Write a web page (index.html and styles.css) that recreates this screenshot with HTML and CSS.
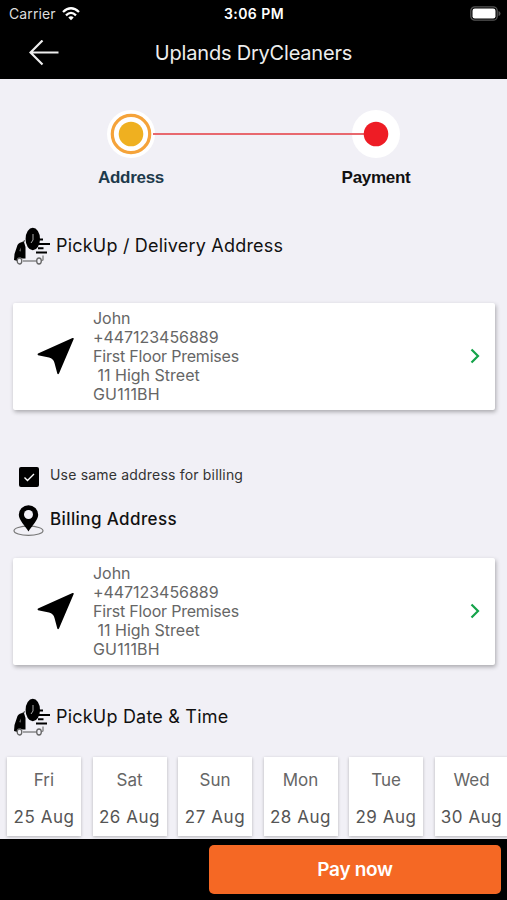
FILE: index.html
```html
<!DOCTYPE html>
<html lang="en">
<head>
	<meta charset="utf-8">
	<meta name="viewport" content="width=device-width, initial-scale=1">
	<title>Uplands DryCleaners</title>
	<link rel="stylesheet" href="styles.css">
</head>
<body>
<svg class="defs" width="0" height="0">
	<symbol id="scooter" viewBox="0 0 37 38">
		<path d="M7 16.500 11 13.500M9 34h14" fill="none" stroke="#555" stroke-width="1.200"/>
		<path d="M3.500 18Q5 15 10 15L11.500 20V31.500H8.500Q5.500 29 3.500 34L0 33 .500 27Z"/>
		<path d="M5 24l2-3.500v4z" fill="#555"/>
		<ellipse cx="18.800" cy="12" rx="7.200" ry="11.200"/>
		<path d="M19 7v6l-2 3" fill="none" stroke="#aaa" stroke-width="1"/>
		<path d="M24 12.500h5M24 17h12M24 21.200h5.500M22 25.500h11" stroke="#000" stroke-width="2"/>
		<path d="M29 28.500v4.500l-2 1" fill="none" stroke="#777" stroke-width="1.200"/>
		<ellipse cx="5.500" cy="34" rx="2.300" ry="3" fill="#f1f0f6" stroke="#666" stroke-width="1.300"/>
		<ellipse cx="25" cy="34" rx="2.300" ry="3" fill="#f1f0f6" stroke="#666" stroke-width="1.300"/>
	</symbol>
	<symbol id="arrow" viewBox="0 0 38 38">
		<path d="M1 16.500 35.500 1Q37 .500 36.700 2L22 36.500Q21 38 20.300 36.500L17.500 26Q16.500 21.500 12 20.500L1 18.300Q0 17.300 1 16.500Z"/>
	</symbol>
	<symbol id="chevron" viewBox="0 0 10 16">
		<path d="M1.500 1.500 8 8 1.500 14.500" fill="none" stroke="#15a34a" stroke-width="2.200"/>
	</symbol>
</svg>
<div class="main">
	<div class="status">
		<div class="carrier">
			<span class="carrier-name">Carrier</span>
			<svg width="18" height="14" viewBox="0 0 18 14" fill="none" stroke="#fff" stroke-width="2.300">
				<path d="M1 5Q9-2.500 17 5M4 8.300Q9 3.500 14 8.300"/>
				<path d="M6.300 10.500Q9 8 11.700 10.500L9 13.300Z" fill="#fff" stroke="none"/>
			</svg>
		</div>
		<div class="clock">3:06 PM</div>
		<svg class="battery" width="31" height="15" viewBox="0 0 31 15">
			<rect x=".800" y=".800" width="26.400" height="13.400" rx="4" fill="none" stroke="#555" stroke-width="1.300"/>
			<rect x="2.500" y="2.500" width="23" height="10" rx="2.300" fill="#fff"/>
			<path d="M28.500 5q2 .500 2 2.500t-2 2.500z" fill="#555"/>
		</svg>
	</div>
	<div class="navbar">
		<svg class="back" width="30" height="26" viewBox="0 0 30 26" fill="none" stroke="#eee" stroke-width="2.200">
			<path d="M29.500 12.500H1.500M13.500 .500 1.500 12.500l12 12"/>
		</svg>
		<h1 class="title">Uplands DryCleaners</h1>
	</div>

	<div class="steps">
		<div class="step">
			<svg width="48" height="48" viewBox="0 0 48 48">
				<circle cx="24" cy="24" r="24" fill="#fff"/>
				<circle cx="24" cy="24" r="18.700" fill="#fff" stroke="#f5a33a" stroke-width="3.200"/>
				<circle cx="24" cy="24" r="12.300" fill="#efb020"/>
			</svg>
			<span class="step-name active">Address</span>
		</div>
		<div class="step-line"></div>
		<div class="step">
			<svg width="48" height="48" viewBox="0 0 48 48">
				<circle cx="24" cy="24" r="24" fill="#fff"/>
				<path d="M0 24h14" stroke="#e8686e" stroke-width="2"/>
				<circle cx="24" cy="24" r="12.300" fill="#ee1c25"/>
			</svg>
			<span class="step-name">Payment</span>
		</div>
	</div>

	<div class="section pickup">
		<svg width="37" height="38"><use href="#scooter"/></svg>
		<h2 class="heading">PickUp / Delivery Address</h2>
	</div>
	<div class="card">
		<svg class="card-arrow" width="38" height="38"><use href="#arrow"/></svg>
		<div class="address">
			<div class="phone">John</div>
			<div class="phone">+447123456889</div>
			<div class="line">First Floor Premises</div>
			<div class="street"> 11 High Street</div>
			<div class="code">GU111BH</div>
		</div>
		<svg class="card-next" width="10" height="16"><use href="#chevron"/></svg>
	</div>

	<div class="same">
		<svg width="20" height="20" viewBox="0 0 20 20">
			<rect width="20" height="20" rx="2"/>
			<path d="M5.500 10.500 8.500 13.500 15 7" fill="none" stroke="#fff" stroke-width="1.400"/>
		</svg>
		<span class="same-text">Use same address for billing</span>
	</div>
	<div class="section billing">
		<svg width="31" height="32" viewBox="0 0 31 32">
			<ellipse cx="15.500" cy="25.700" rx="14.500" ry="4.600" fill="none" stroke="#777" stroke-width="1.200"/>
			<path d="M15.500 26.500C12 21 5.800 15 5.800 9.800A9.700 9.500 0 0 1 25.200 9.800C25.200 15 19 21 15.500 26.500Z"/>
			<circle cx="15.500" cy="9.500" r="4.500" fill="#f1f0f6"/>
		</svg>
		<h2 class="heading billing-heading">Billing Address</h2>
	</div>
	<div class="card">
		<svg class="card-arrow" width="38" height="38"><use href="#arrow"/></svg>
		<div class="address">
			<div class="phone">John</div>
			<div class="phone">+447123456889</div>
			<div class="line">First Floor Premises</div>
			<div class="street"> 11 High Street</div>
			<div class="code">GU111BH</div>
		</div>
		<svg class="card-next" width="10" height="16"><use href="#chevron"/></svg>
	</div>

	<div class="section when">
		<svg width="37" height="38"><use href="#scooter"/></svg>
		<h2 class="heading">PickUp Date &amp; Time</h2>
	</div>
	<div class="days">
		<div class="day"><span>Fri</span><span class="date">25 Aug</span></div>
		<div class="day"><span>Sat</span><span class="date">26 Aug</span></div>
		<div class="day"><span>Sun</span><span class="date">27 Aug</span></div>
		<div class="day"><span>Mon</span><span class="date">28 Aug</span></div>
		<div class="day"><span>Tue</span><span class="date">29 Aug</span></div>
		<div class="day"><span>Wed</span><span class="date">30 Aug</span></div>
	</div>
	<div class="footer">
		<button class="pay">Pay now</button>
	</div>
</div>
</body>
</html>
```
FILE: styles.css
```css
* {
    box-sizing: border-box;
    margin: 0;
    padding: 0;
}
body {
    background: #f1f0f6;
    font-family: Inter, "Liberation Sans", sans-serif;
    overflow: hidden;
}
svg {
    display: block;
    flex-shrink: 0;
}
.defs {
    position: absolute;
}
.main {
    height: 900px;
    display: flex;
    flex-direction: column;
    overflow: hidden;
}
.main > div {
    flex-shrink: 0;
}

/* top bars */
.status {
    height: 27px;
    padding: 0 6px 0 9px;
    display: grid;
    grid-template-columns: 1fr auto 1fr;
    align-items: center;
    background: #000;
    color: #fff;
}
.carrier {
    display: flex;
    align-items: center;
    gap: 6px;
}
.carrier-name {
    font-size: 14px;
    letter-spacing: 0.1px;
    color: #ddd;
}
.clock {
    font-size: 14px;
    font-weight: 600;
    letter-spacing: 0.45px;
    margin-right: 2px;
}
.battery {
    justify-self: end;
}
.navbar {
    height: 52px;
    padding: 0 29px;
    display: grid;
    grid-template-columns: 30px 1fr 30px;
    align-items: center;
    background: #000;
}
.title {
    font-size: 20px;
    font-weight: 400;
    letter-spacing: -0.2px;
    color: #eee;
    text-align: center;
}

/* progress */
.steps {
    height: 136px;
    padding: 31px 81px 0;
    display: flex;
}
.step {
    width: 100px;
    display: flex;
    flex-direction: column;
    align-items: center;
    gap: 10px;
}
.step-line {
    flex: 1;
    height: 2px;
    margin: 23px -26px 0 -28px;
    background: #e8686e;
}
.step-name {
    font-family: "Liberation Sans", Arial, sans-serif;
    font-size: 17px;
    font-weight: 700;
    line-height: 20px;
    letter-spacing: -0.3px;
    color: #111;
}
.step-name.active {
    color: #1d3a4c;
}

/* sections */
.section {
    display: flex;
    align-items: center;
}
.heading {
    font-size: 18px;
    font-weight: 400;
    line-height: 24px;
    letter-spacing: 0.2px;
    color: #111;
    white-space: nowrap;
}
.pickup {
    height: 62px;
    margin-bottom: 26px;
    padding-left: 14px;
    gap: 5px;
}
.billing {
    height: 36px;
    margin-bottom: 19px;
    padding-left: 13px;
    gap: 6px;
}
.billing-heading {
    font-size: 17px;
    font-weight: 500;
    letter-spacing: 0.4px;
    padding-bottom: 5px;
}
.when {
    height: 60px;
    margin: 22px 0 10px;
    padding-left: 14px;
    gap: 5px;
}
.card {
    height: 107px;
    margin: 0 12px 0 13px;
    padding: 0 15px 0 24px;
    display: flex;
    align-items: center;
    background: #fff;
    border-radius: 2px;
    box-shadow: 1px 2px 4px rgba(0, 0, 0, 0.3);
}
.card-arrow {
    margin: 0 18px 2px 0;
}
.card-next {
    margin-bottom: 2px;
}
.address {
    flex: 1;
    font-size: 16px;
    line-height: 19px;
    color: #666;
}
.line {
    letter-spacing: -0.2px;
}
.street {
    white-space: pre;
}
.phone {
    letter-spacing: -0.05px;
}
.code {
    letter-spacing: 0.15px;
}
.same {
    height: 20px;
    margin: 57px 0 16px;
    padding-left: 19px;
    display: flex;
    align-items: center;
    gap: 11px;
}
.same-text {
    font-size: 14px;
    letter-spacing: 0.19px;
    padding-bottom: 5px;
    color: #333;
}

/* pickup days */
.days {
    height: 82px;
    padding-left: 7px;
    display: flex;
    gap: 11.500px;
}
.day {
    width: 74px;
    height: 79px;
    padding-top: 11px;
    flex-shrink: 0;
    display: flex;
    flex-direction: column;
    align-items: center;
    gap: 13px;
    background: #fff;
    box-shadow: 0 1px 3px rgba(0, 0, 0, 0.25);
    font-size: 17px;
    line-height: 24px;
    color: #666;
}
.date {
    color: #555;
    letter-spacing: 0.55px;
    white-space: nowrap;
}
.footer {
    height: 61px;
    padding: 6px 6px 6px 209px;
    background: #000;
    display: flex;
}
.pay {
    flex: 1;
    border: none;
    border-radius: 5px;
    background: #f56824;
    color: #fff;
    font-family: inherit;
    font-size: 19px;
    font-weight: 600;
    letter-spacing: -0.3px;
}
```
